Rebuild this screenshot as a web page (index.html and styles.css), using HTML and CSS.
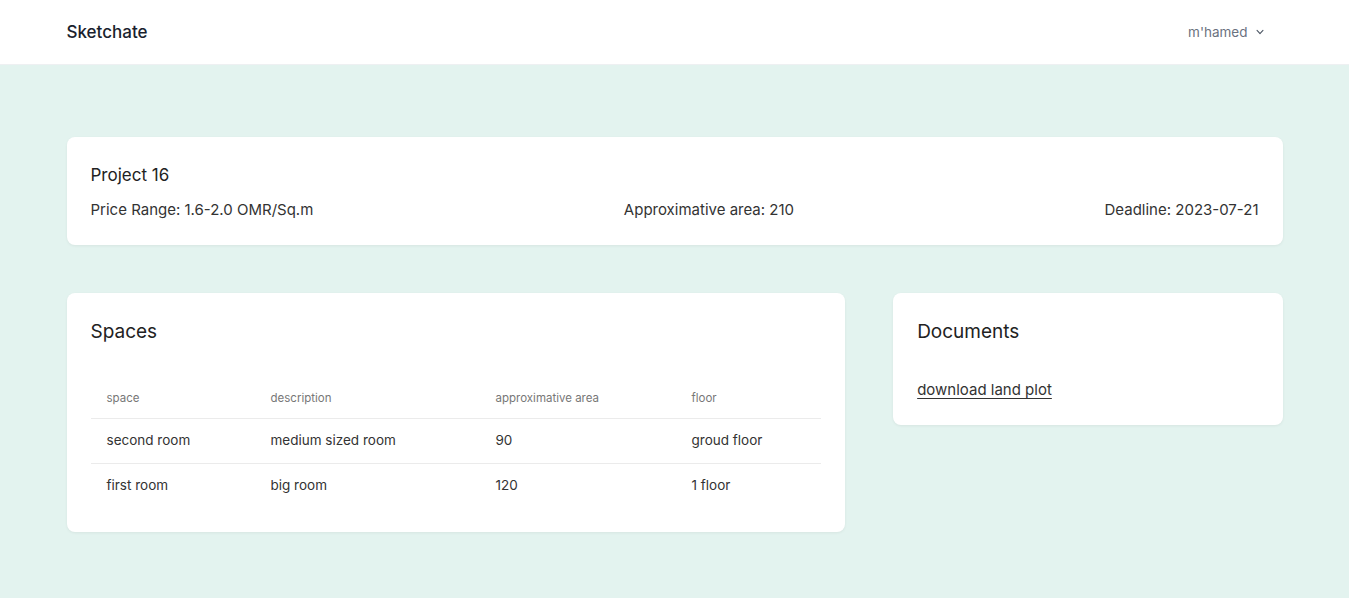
FILE: index.html
```html
<!DOCTYPE html>
<html lang="en">
<head>
<meta charset="utf-8">
<title>Sketchate</title>
<link rel="stylesheet" href="styles.css">
</head>
<body>
<header class="topbar">
  <div class="container topbar-inner">
    <div class="brand">Sketchate</div>
    <button class="user">m'hamed
      <svg class="chev" width="12" height="12" viewBox="0 0 20 20" fill="currentColor"><path fill-rule="evenodd" d="M5.23 7.21a.75.75 0 011.06.02L10 11.17l3.710-3.94a.75.75 0 111.08 1.04l-4.25 4.5a.75.75 0 01-1.08 0l-4.25-4.5a.75.75 0 01.02-1.06z" clip-rule="evenodd"/></svg>
    </button>
  </div>
</header>
<main class="container main">
  <section class="card project">
    <h2 class="project-title">Project 16</h2>
    <div class="project-meta">
      <span>Price Range: 1.6-2.0 OMR/Sq.m</span>
      <span>Approximative area: 210</span>
      <span>Deadline: 2023-07-21</span>
    </div>
  </section>
  <div class="grid">
    <section class="card spaces">
      <h3 class="card-title">Spaces</h3>
      <table class="table">
        <thead>
          <tr><th>space</th><th>description</th><th>approximative area</th><th>floor</th></tr>
        </thead>
        <tbody>
          <tr><td>second room</td><td>medium sized room</td><td>90</td><td>groud floor</td></tr>
          <tr><td>first room</td><td>big room</td><td>120</td><td>1 floor</td></tr>
        </tbody>
      </table>
    </section>
    <section class="card docs">
      <h3 class="card-title">Documents</h3>
      <a class="doc-link" href="#">download land plot</a>
    </section>
  </div>
</main>
</body>
</html>
```
FILE: styles.css
```css
* { box-sizing: border-box; }
html, body { margin: 0; padding: 0; }
body {
  font-family: Inter, "Noto Sans", sans-serif;
  background: #e3f3ef;
  color: #333;
  min-height: 598px;
}
.container {
  max-width: 1280px;
  margin: 0 auto;
  padding: 0 32px;
}
.topbar {
  background: #fff;
  height: 65px;
  border-bottom: 1px solid #eef0f2;
}
.topbar-inner {
  height: 64px;
  display: flex;
  align-items: center;
  justify-content: space-between;
}
.brand {
  font-size: 17px;
  font-weight: 500;
  color: #1a1f2e;
}
.user {
  border: 0;
  background: none;
  font-family: inherit;
  font-size: 13.5px;
  color: #6b7280;
  display: flex;
  align-items: center;
  gap: 5px;
  padding: 0 16px 0 0;
  cursor: pointer;
}
.chev { color: #4b5563; width: 14px; height: 14px; }
.main { padding-top: 72px; }
.card {
  background: #fff;
  border-radius: 8px;
  box-shadow: 0 1px 3px rgba(0,0,0,0.06);
  padding: 24px;
}
.project { padding: 26px 24px 24px; }
.project-title {
  margin: 0 0 12px;
  font-size: 17px;
  font-weight: 400;
  color: #222;
  line-height: 24px;
}
.project-meta {
  display: flex;
  justify-content: space-between;
  font-size: 15px;
  line-height: 22px;
  color: #333;
}
.grid {
  margin-top: 48px;
  display: grid;
  grid-template-columns: 2fr 1fr;
  gap: 48px;
  align-items: start;
}
.card-title {
  margin: 0;
  font-size: 19px;
  font-weight: 400;
  line-height: 30px;
  color: #222;
}
.spaces { padding-bottom: 24px; }
.table {
  width: 100%;
  border-collapse: collapse;
  margin-top: 34px;
  text-align: left;
}
.table th {
  font-size: 11.5px;
  font-weight: 400;
  color: #777;
  padding: 10px 16px 13px;
  border-bottom: 1px solid #ebebeb;
}
.table td {
  font-size: 13.5px;
  color: #333;
  padding: 13px 16px 15px;
}
.table tbody tr + tr td { border-top: 1px solid #ebebeb; }
.table th:nth-child(1) { width: 164px; }
.table th:nth-child(2) { width: 225px; }
.table th:nth-child(3) { width: 196px; }
.doc-link {
  display: inline-block;
  margin-top: 33px;
  font-size: 15px;
  color: #333;
  text-decoration: underline;
  text-underline-offset: 3px;
  margin-bottom: 2px;
}
```
